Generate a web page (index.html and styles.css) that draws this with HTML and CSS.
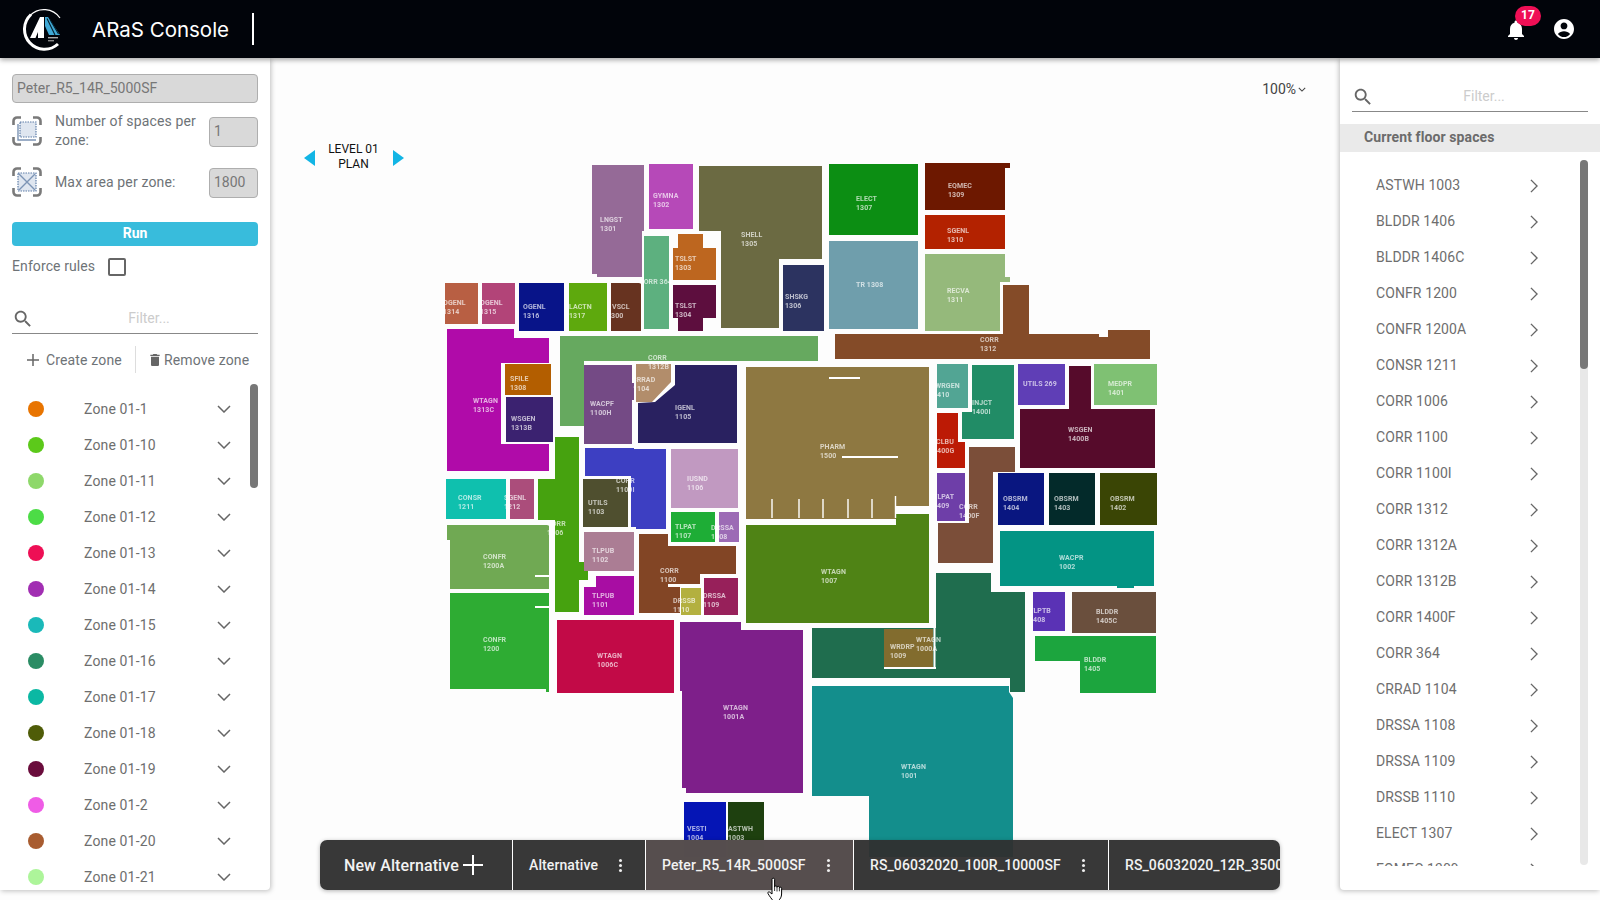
FILE: index.html
```html
<!DOCTYPE html>
<html lang="en">
<head>
    <meta charset="UTF-8">
    <meta name="viewport" content="width=device-width, initial-scale=1.0">
    <title>ARaS Console</title>
    <link rel="stylesheet" href="styles.css">
</head>
<body>
    <header class="topbar">
        <svg class="logo" viewBox="0 0 44 44">
            <path d="M38 11A19.500 19.500 0 0 0 8 8.500" fill="none" stroke="#fff" stroke-width="1.200"/>
            <path d="M9 7.500A19.500 19.500 0 0 0 36 37" fill="none" stroke="#fff" stroke-width="3"/>
            <polygon points="18,10 22,10 22,31 16,31 16,25 13.500,31 8,31" fill="#fff"/>
            <polygon points="23,10 26,10 38,28 27,28 23,19" fill="#3fa9d6"/>
            <path d="M25 11.500L33 28M28 12.500L36.500 27" stroke="#06202e" stroke-width="1.100" fill="none"/>
            <rect x="26" y="30" width="10" height="1.400" fill="#aaa"/>
            <rect x="26" y="33" width="6" height="1.400" fill="#888"/>
        </svg>
        <div class="app-title">ARaS Console</div>
        <div class="title-sep"></div>
        <div class="spacer"></div>
        <div class="bell">
            <svg viewBox="0 0 24 24" width="24" height="24"><path fill="#fff" d="M12 22c1.100 0 2-.9 2-2h-4c0 1.100.9 2 2 2zm6-6v-5c0-3.100-1.600-5.600-4.500-6.300V4c0-.8-.7-1.500-1.500-1.500s-1.500.7-1.500 1.500v.7C7.600 5.400 6 7.900 6 11v5l-2 2v1h16v-1l-2-2z"/></svg>
            <span class="badge">17</span>
        </div>
        <svg class="user" viewBox="0 0 24 24" width="24" height="24"><path fill="#fff" d="M12 2C6.480 2 2 6.480 2 12s4.480 10 10 10 10-4.480 10-10S17.520 2 12 2zm0 3.500c1.900 0 3.400 1.500 3.400 3.400s-1.500 3.400-3.400 3.400-3.400-1.500-3.400-3.400 1.500-3.400 3.400-3.400zM12 20c-2.500 0-4.700-1.200-6.100-3.100 1.500-1.700 3.700-2.600 6.100-2.600s4.600.9 6.100 2.600C16.700 18.800 14.500 20 12 20z"/></svg>
    </header>

    <div class="main">
        <aside class="left">
            <input class="field name-field" type="text" value="Peter_R5_14R_5000SF" disabled>
            <div class="param">
                <svg class="param-icon" viewBox="0 0 30 30">
                    <path class="brk" d="M1.500 9V5a3.500 3.500 0 0 1 3.500-3.500h4M21 1.500h4A3.500 3.500 0 0 1 28.500 5v4M28.500 21v4a3.500 3.500 0 0 1-3.500 3.500h-4M9 28.500H5A3.500 3.500 0 0 1 1.500 25v-4"/>
                    <rect class="dash" x="8" y="6" width="16" height="15"/>
                    <path class="solid" d="M6 8v16h18"/>
                </svg>
                <label>Number of spaces per zone:</label>
                <input class="field small-field" type="text" value="1" disabled>
            </div>
            <div class="param param-two">
                <svg class="param-icon" viewBox="0 0 30 30">
                    <path class="brk" d="M1.500 9V5a3.500 3.500 0 0 1 3.500-3.500h4M21 1.500h4A3.500 3.500 0 0 1 28.500 5v4M28.500 21v4a3.500 3.500 0 0 1-3.500 3.500h-4M9 28.500H5A3.500 3.500 0 0 1 1.500 25v-4"/>
                    <rect class="dash" x="6" y="6" width="18" height="18"/>
                    <path class="solid" d="M7 7l16 16M23 7L7 23"/>
                </svg>
                <label>Max area per zone:</label>
                <input class="field small-field" type="text" value="1800" disabled>
            </div>
            <button class="run">Run</button>
            <div class="enforce">
                <span>Enforce rules</span>
                <span class="checkbox"></span>
            </div>
            <div class="filter left-filter">
                <svg viewBox="0 0 24 24" width="22" height="22"><path fill="#666" d="M15.500 14h-.8l-.3-.3c1-1.100 1.600-2.600 1.600-4.200C16 5.900 13.100 3 9.500 3S3 5.900 3 9.500 5.900 16 9.500 16c1.600 0 3.100-.6 4.200-1.600l.3.3v.8l5 5 1.500-1.500-5-5zm-6 0C7 14 5 12 5 9.500S7 5 9.500 5 14 7 14 9.500 12 14 9.500 14z"/></svg>
                <span class="filter-text">Filter...</span>
            </div>
            <div class="zone-actions">
                <span class="action action-add">
                    <svg viewBox="0 0 14 14" width="14" height="14"><path d="M7 1v12M1 7h12" stroke="#666" stroke-width="1.500" fill="none"/></svg>
                    Create zone
                </span>
                <span class="action-sep"></span>
                <span class="action">
                    <svg viewBox="0 0 24 24" width="16" height="16"><path fill="#666" d="M6 19c0 1.100.9 2 2 2h8c1.100 0 2-.9 2-2V7H6v12zM19 4h-3.500l-1-1h-5l-1 1H5v2h14V4z"/></svg>
                    Remove zone
                </span>
            </div>
            <div class="zone-wrap">
                <div class="zone-scroll"></div>
                <ul class="zones">
                    <li><span class="dot" style="background:#e87400"></span>Zone 01-1<svg class="down" viewBox="0 0 14 8"><path d="M1 1l6 6 6-6"/></svg></li>
                    <li><span class="dot" style="background:#5cc91a"></span>Zone 01-10<svg class="down" viewBox="0 0 14 8"><path d="M1 1l6 6 6-6"/></svg></li>
                    <li><span class="dot" style="background:#8ed86a"></span>Zone 01-11<svg class="down" viewBox="0 0 14 8"><path d="M1 1l6 6 6-6"/></svg></li>
                    <li><span class="dot" style="background:#4cdc46"></span>Zone 01-12<svg class="down" viewBox="0 0 14 8"><path d="M1 1l6 6 6-6"/></svg></li>
                    <li><span class="dot" style="background:#ee0f55"></span>Zone 01-13<svg class="down" viewBox="0 0 14 8"><path d="M1 1l6 6 6-6"/></svg></li>
                    <li><span class="dot" style="background:#a12eb2"></span>Zone 01-14<svg class="down" viewBox="0 0 14 8"><path d="M1 1l6 6 6-6"/></svg></li>
                    <li><span class="dot" style="background:#1ab9b9"></span>Zone 01-15<svg class="down" viewBox="0 0 14 8"><path d="M1 1l6 6 6-6"/></svg></li>
                    <li><span class="dot" style="background:#2a8c64"></span>Zone 01-16<svg class="down" viewBox="0 0 14 8"><path d="M1 1l6 6 6-6"/></svg></li>
                    <li><span class="dot" style="background:#0bb8a3"></span>Zone 01-17<svg class="down" viewBox="0 0 14 8"><path d="M1 1l6 6 6-6"/></svg></li>
                    <li><span class="dot" style="background:#4f5c08"></span>Zone 01-18<svg class="down" viewBox="0 0 14 8"><path d="M1 1l6 6 6-6"/></svg></li>
                    <li><span class="dot" style="background:#6a0c3c"></span>Zone 01-19<svg class="down" viewBox="0 0 14 8"><path d="M1 1l6 6 6-6"/></svg></li>
                    <li><span class="dot" style="background:#ef5ce6"></span>Zone 01-2<svg class="down" viewBox="0 0 14 8"><path d="M1 1l6 6 6-6"/></svg></li>
                    <li><span class="dot" style="background:#a85c30"></span>Zone 01-20<svg class="down" viewBox="0 0 14 8"><path d="M1 1l6 6 6-6"/></svg></li>
                    <li><span class="dot" style="background:#adf59a"></span>Zone 01-21<svg class="down" viewBox="0 0 14 8"><path d="M1 1l6 6 6-6"/></svg></li>
                </ul>
            </div>
        </aside>

        <section class="canvas">
            <div class="zoom-ctl">100%<svg viewBox="0 0 10 6" width="8" height="5"><path d="M1 1l4 4 4-4" fill="none" stroke="#444" stroke-width="1.300"/></svg></div>
            <div class="level">
                <span class="arrow arrow-left"></span>
                <span class="level-name">LEVEL 01<br>PLAN</span>
                <span class="arrow arrow-right"></span>
            </div>

            <svg class="plan" viewBox="430 150 740 720" width="740" height="720">
                <g>
                    <polygon fill="#956a97" points="592,165 644,165 644,231 642,231 642,277 597,277 597,274 592,274"/>
                    <polygon fill="#b649b8" points="649,164 693,164 693,229 649,229"/>
                    <polygon fill="#6b6a42" points="699,166 822,166 822,259 779,259 779,328 721,328 721,231 699,231"/>
                    <polygon fill="#5db07f" points="644,236 669,236 669,329 644,329"/>
                    <polygon fill="#bd661f" points="678,234 703,234 703,248 716,248 716,280 673,280 673,248 678,248"/>
                    <polygon fill="#5d0e3e" points="673,285 716,285 716,318 703,318 703,331 678,331 678,318 673,318"/>
                    <polygon fill="#2c3360" points="783,265 824,265 824,331 783,331"/>
                    <polygon fill="#b85f43" points="445,283 478,283 478,324 445,324"/>
                    <polygon fill="#b24478" points="482,283 515,283 515,324 482,324"/>
                    <polygon fill="#081489" points="519,283 564,283 564,331 519,331"/>
                    <polygon fill="#5ea90d" points="569,283 607,283 607,331 569,331"/>
                    <polygon fill="#673320" points="611,283 641,283 641,331 611,331"/>
                    <polygon fill="#66a95f" points="560,336 818,336 818,361 584,361 584,426 560,426"/>
                    <polygon fill="#b00ba9" points="447,329 514,329 514,338 549,338 549,363 501,363 501,444 549,444 549,471 447,471"/>
                    <polygon fill="#b35e00" points="505,364 551,364 551,395 505,395"/>
                    <polygon fill="#3b2270" points="506,397 553,397 553,442 506,442"/>
                    <polygon fill="#744a85" points="584,365 632,365 632,383 634,383 634,400 632,400 632,444 584,444"/>
                    <polygon fill="#292160" points="675,365 737,365 737,443 638,443 638,403 655,402 675,385"/>
                    <polygon fill="#b28d6b" points="636,364 671,364 671,382 652,402 636,402"/>
                    <polygon fill="#8e7841" points="746,367 929,367 929,506 896,506 896,519 746,519"/>
                    <polygon fill="#4f8315" points="746,525 896,525 896,514 929,514 929,623 746,623"/>
                    <polygon fill="#0c8e13" points="829,164 918,164 918,235 829,235"/>
                    <polygon fill="#6f9eac" points="829,241 918,241 918,329 829,329"/>
                    <polygon fill="#6d1800" points="925,163 1010,163 1010,168 1005,168 1005,210 925,210"/>
                    <polygon fill="#b32200" points="925,215 1005,215 1005,249 925,249"/>
                    <polygon fill="#95b97b" points="925,254 1005,254 1005,277 1010,277 1010,282 1000,282 1000,331 925,331"/>
                    <polygon fill="#844b28" points="1003,285 1029,285 1029,334 1099,334 1099,337 1108,337 1108,330 1150,330 1150,359 835,359 835,334 1003,334"/>
                    <polygon fill="#52a594" points="937,364 968,364 968,408 937,408"/>
                    <polygon fill="#218c66" points="972,365 1014,365 1014,439 962,439 962,412 972,412"/>
                    <polygon fill="#5f3eb6" points="1018,364 1065,364 1065,405 1018,405"/>
                    <polygon fill="#7fc173" points="1094,364 1157,364 1157,405 1094,405"/>
                    <polygon fill="#560b2b" points="1069,366 1091,366 1091,409 1155,409 1155,468 1020,468 1020,409 1069,409"/>
                    <polygon fill="#bc1a05" points="937,413 958,413 958,442 965,442 965,468 937,468"/>
                    <polygon fill="#6e3ea8" points="937,473 965,473 965,521 937,521"/>
                    <polygon fill="#7b4e39" points="969,447 1015,447 1015,472 993,472 993,563 938,563 938,523 969,523"/>
                    <polygon fill="#091680" points="998,473 1044,473 1044,525 998,525"/>
                    <polygon fill="#032a2a" points="1049,473 1095,473 1095,525 1049,525"/>
                    <polygon fill="#3a4505" points="1100,473 1157,473 1157,525 1100,525"/>
                    <polygon fill="#039484" points="1000,531 1154,531 1154,586 1134,586 1134,588 1117,588 1117,586 1000,586"/>
                    <polygon fill="#5a32b5" points="1033,592 1065,592 1065,631 1033,631"/>
                    <polygon fill="#6a4f3d" points="1072,592 1156,592 1156,633 1072,633"/>
                    <polygon fill="#1ca53e" points="1035,636 1156,636 1156,693 1080,693 1080,661 1035,661"/>
                    <polygon fill="#1f6d4e" points="936,573 991,573 991,592 1025,592 1025,692 1010,692 1010,678 812,678 812,628 936,628"/>
                    <polygon fill="#826c2e" points="884,629 933,629 933,667 884,667"/>
                    <polygon fill="#138e8c" points="812,686 1009,686 1009,692 1013,698 1013,857 869,857 869,796 812,796"/>
                    <polygon fill="#7e1f8a" points="680,622 741,622 741,630 803,630 803,793 686,793 686,788 682,788 682,691 680,691"/>
                    <polygon fill="#0515b5" points="684,802 726,802 726,857 684,857"/>
                    <polygon fill="#1e400f" points="728,802 764,802 764,857 728,857"/>
                    <polygon fill="#46a20f" points="555,437 579,437 579,562 588,562 588,580 579,580 579,612 555,612 555,520 538,520 538,479 555,479"/>
                    <polygon fill="#0fc0ae" points="446,479 506,479 506,519 446,519"/>
                    <polygon fill="#ab4d7b" points="510,479 534,479 534,519 510,519"/>
                    <polygon fill="#70a953" points="447,525 549,525 549,589 450,589 450,540 447,540"/>
                    <polygon fill="#2eac33" points="450,593 549,593 549,692 546,692 546,689 450,689"/>
                    <polygon fill="#c20a47" points="557,620 674,620 674,693 557,693"/>
                    <polygon fill="#3d3fc2" points="585,448 634,448 634,449 666,449 666,529 636,529 636,527 631,527 631,476 585,476"/>
                    <polygon fill="#4f4f2f" points="583,479 628,479 628,527 583,527"/>
                    <polygon fill="#c199c1" points="671,449 738,449 738,508 671,508"/>
                    <polygon fill="#1ead36" points="671,512 715,512 715,542 671,542"/>
                    <polygon fill="#9c6bb5" points="719,512 739,512 739,542 719,542"/>
                    <polygon fill="#ab7d94" points="584,532 634,532 634,571 584,571"/>
                    <polygon fill="#a80da3" points="596,576 634,576 634,615 584,615 584,587 596,587"/>
                    <polygon fill="#824525" points="639,534 668,534 668,546 736,546 736,574 700,574 700,584 668,584 668,587 680,587 680,613 639,613"/>
                    <polygon fill="#b3b03f" points="681,588 701,588 701,615 681,615"/>
                    <polygon fill="#97205a" points="704,578 738,578 738,615 704,615"/>
                </g>
                <path class="wall" d="M829 378h31M842 457h56M535 576h14M535 607h14M884 668h52M934.500 628v40"/>
                <path class="tick" d="M772 499v19M799 499v19M823 499v19M848 499v19M872 499v19M895.500 496v22"/>
                <g class="labels">
                    <text x="600" y="222">LNGST<tspan x="600" dy="8.500">1301</tspan></text>
                    <text x="653" y="198">GYMNA<tspan x="653" dy="8.500">1302</tspan></text>
                    <text x="741" y="237">SHELL<tspan x="741" dy="8.500">1305</tspan></text>
                    <text x="639" y="284">CORR 364</text>
                    <text x="675" y="261">TSLST<tspan x="675" dy="8.500">1303</tspan></text>
                    <text x="675" y="308">TSLST<tspan x="675" dy="8.500">1304</tspan></text>
                    <text x="785" y="299">SHSKG<tspan x="785" dy="8.500">1306</tspan></text>
                    <text x="443" y="305">OGENL<tspan x="443" dy="8.500">1314</tspan></text>
                    <text x="480" y="305">OGENL<tspan x="480" dy="8.500">1315</tspan></text>
                    <text x="523" y="309">OGENL<tspan x="523" dy="8.500">1316</tspan></text>
                    <text x="569" y="309">LACTN<tspan x="569" dy="8.500">1317</tspan></text>
                    <text x="612" y="309">VSCL<tspan x="607" dy="8.500">1300</tspan></text>
                    <text x="473" y="403">WTAGN<tspan x="473" dy="8.500">1313C</tspan></text>
                    <text x="510" y="381">SFILE<tspan x="510" dy="8.500">1308</tspan></text>
                    <text x="511" y="421">WSGEN<tspan x="511" dy="8.500">1313B</tspan></text>
                    <text x="648" y="360">CORR<tspan x="648" dy="8.500">1312B</tspan></text>
                    <text x="632" y="382">CRRAD<tspan x="633" dy="8.500">1104</tspan></text>
                    <text x="590" y="406">WACPF<tspan x="590" dy="8.500">1100H</tspan></text>
                    <text x="675" y="410">IGENL<tspan x="675" dy="8.500">1105</tspan></text>
                    <text x="820" y="449">PHARM<tspan x="820" dy="8.500">1500</tspan></text>
                    <text x="856" y="201">ELECT<tspan x="856" dy="8.500">1307</tspan></text>
                    <text x="856" y="287">TR 1308</text>
                    <text x="948" y="188">EQMEC<tspan x="948" dy="8.500">1309</tspan></text>
                    <text x="947" y="233">SGENL<tspan x="947" dy="8.500">1310</tspan></text>
                    <text x="947" y="293">RECVA<tspan x="947" dy="8.500">1311</tspan></text>
                    <text x="980" y="342">CORR<tspan x="980" dy="8.500">1312</tspan></text>
                    <text x="935" y="388">WRGEN<tspan x="933" dy="8.500">1410</tspan></text>
                    <text x="972" y="405">INJCT<tspan x="972" dy="8.500">1400I</tspan></text>
                    <text x="1023" y="386">UTILS 269</text>
                    <text x="1108" y="386">MEDPR<tspan x="1108" dy="8.500">1401</tspan></text>
                    <text x="1068" y="432">WSGEN<tspan x="1068" dy="8.500">1400B</tspan></text>
                    <text x="936" y="444">CLBU<tspan x="933" dy="8.500">1400G</tspan></text>
                    <text x="933" y="499">TLPAT<tspan x="933" dy="8.500">1409</tspan></text>
                    <text x="959" y="509">CORR<tspan x="959" dy="8.500">1400F</tspan></text>
                    <text x="1003" y="501">OBSRM<tspan x="1003" dy="8.500">1404</tspan></text>
                    <text x="1054" y="501">OBSRM<tspan x="1054" dy="8.500">1403</tspan></text>
                    <text x="1110" y="501">OBSRM<tspan x="1110" dy="8.500">1402</tspan></text>
                    <text x="1059" y="560">WACPR<tspan x="1059" dy="8.500">1002</tspan></text>
                    <text x="1029" y="613">TLPTB<tspan x="1029" dy="8.500">1408</tspan></text>
                    <text x="1096" y="614">BLDDR<tspan x="1096" dy="8.500">1405C</tspan></text>
                    <text x="1084" y="662">BLDDR<tspan x="1084" dy="8.500">1405</tspan></text>
                    <text x="821" y="574">WTAGN<tspan x="821" dy="8.500">1007</tspan></text>
                    <text x="890" y="649">WRDRP<tspan x="890" dy="8.500">1009</tspan></text>
                    <text x="916" y="642">WTAGN<tspan x="916" dy="8.500">1000A</tspan></text>
                    <text x="901" y="769">WTAGN<tspan x="901" dy="8.500">1001</tspan></text>
                    <text x="723" y="710">WTAGN<tspan x="723" dy="8.500">1001A</tspan></text>
                    <text x="687" y="831">VESTI<tspan x="687" dy="8.500">1004</tspan></text>
                    <text x="728" y="831">ASTWH<tspan x="728" dy="8.500">1003</tspan></text>
                    <text x="458" y="500">CONSR<tspan x="458" dy="8.500">1211</tspan></text>
                    <text x="504" y="500">SGENL<tspan x="504" dy="8.500">1212</tspan></text>
                    <text x="483" y="559">CONFR<tspan x="483" dy="8.500">1200A</tspan></text>
                    <text x="483" y="642">CONFR<tspan x="483" dy="8.500">1200</tspan></text>
                    <text x="597" y="658">WTAGN<tspan x="597" dy="8.500">1006C</tspan></text>
                    <text x="616" y="483">CORR<tspan x="616" dy="8.500">1100I</tspan></text>
                    <text x="588" y="505">UTILS<tspan x="588" dy="8.500">1103</tspan></text>
                    <text x="687" y="481">IUSND<tspan x="687" dy="8.500">1106</tspan></text>
                    <text x="675" y="529">TLPAT<tspan x="675" dy="8.500">1107</tspan></text>
                    <text x="711" y="530">DRSSA<tspan x="711" dy="8.500">1108</tspan></text>
                    <text x="592" y="553">TLPUB<tspan x="592" dy="8.500">1102</tspan></text>
                    <text x="592" y="598">TLPUB<tspan x="592" dy="8.500">1101</tspan></text>
                    <text x="660" y="573">CORR<tspan x="660" dy="8.500">1100</tspan></text>
                    <text x="673" y="603">DRSSB<tspan x="673" dy="8.500">1110</tspan></text>
                    <text x="703" y="598">DRSSA<tspan x="703" dy="8.500">1109</tspan></text>
                    <text x="547" y="526">CORR<tspan x="547" dy="8.500">1106</tspan></text>
                </g>
            </svg>

            <div class="alts">
                <div class="alt alt-new">New Alternative
                    <svg viewBox="0 0 20 20" width="20" height="20"><path d="M10 0v20M0 10h20" stroke="#fff" stroke-width="2" fill="none"/></svg>
                </div>
                <div class="alt alt-a">Alternative<span class="kebab"><i></i><i></i><i></i></span></div>
                <div class="alt alt-b alt-active">Peter_R5_14R_5000SF<span class="kebab"><i></i><i></i><i></i></span></div>
                <div class="alt alt-c">RS_06032020_100R_10000SF<span class="kebab"><i></i><i></i><i></i></span></div>
                <div class="alt alt-d">RS_06032020_12R_3500SF</div>
            </div>
            <svg class="hand" viewBox="0 0 17 25" width="17" height="25">
                <path fill="#fff" stroke="#000" stroke-width="1" d="M5 2.500a1.300 1.300 0 0 1 2.600 0v7.500a1.200 1.200 0 0 1 2.400 0v.5a1.200 1.200 0 0 1 2.400 0v.8a1.100 1.100 0 0 1 2.200 0V17c0 3-1.500 5-3 6.500H6c-1-1-4-5-5-7-.5-1 .5-2.200 1.600-1.400L5 17z"/>
                <path stroke="#000" stroke-width=".8" d="M7.600 10v4M10 10.500v4M12.400 11.300v3"/>
            </svg>
        </section>

        <aside class="right">
            <div class="filter right-filter">
                <svg viewBox="0 0 24 24" width="22" height="22"><path fill="#666" d="M15.500 14h-.8l-.3-.3c1-1.100 1.600-2.600 1.600-4.200C16 5.900 13.100 3 9.500 3S3 5.900 3 9.500 5.900 16 9.500 16c1.600 0 3.100-.6 4.200-1.600l.3.3v.8l5 5 1.500-1.500-5-5zm-6 0C7 14 5 12 5 9.500S7 5 9.500 5 14 7 14 9.500 12 14 9.500 14z"/></svg>
                <span class="filter-text">Filter...</span>
            </div>
            <div class="band">Current floor spaces</div>
            <div class="space-wrap">
                <div class="space-track"><div class="space-thumb"></div></div>
                <ul class="spaces">
                    <li>ASTWH 1003<svg class="next" viewBox="0 0 9 16"><path d="M1 1l7 7-7 7"/></svg></li>
                    <li>BLDDR 1406<svg class="next" viewBox="0 0 9 16"><path d="M1 1l7 7-7 7"/></svg></li>
                    <li>BLDDR 1406C<svg class="next" viewBox="0 0 9 16"><path d="M1 1l7 7-7 7"/></svg></li>
                    <li>CONFR 1200<svg class="next" viewBox="0 0 9 16"><path d="M1 1l7 7-7 7"/></svg></li>
                    <li>CONFR 1200A<svg class="next" viewBox="0 0 9 16"><path d="M1 1l7 7-7 7"/></svg></li>
                    <li>CONSR 1211<svg class="next" viewBox="0 0 9 16"><path d="M1 1l7 7-7 7"/></svg></li>
                    <li>CORR 1006<svg class="next" viewBox="0 0 9 16"><path d="M1 1l7 7-7 7"/></svg></li>
                    <li>CORR 1100<svg class="next" viewBox="0 0 9 16"><path d="M1 1l7 7-7 7"/></svg></li>
                    <li>CORR 1100I<svg class="next" viewBox="0 0 9 16"><path d="M1 1l7 7-7 7"/></svg></li>
                    <li>CORR 1312<svg class="next" viewBox="0 0 9 16"><path d="M1 1l7 7-7 7"/></svg></li>
                    <li>CORR 1312A<svg class="next" viewBox="0 0 9 16"><path d="M1 1l7 7-7 7"/></svg></li>
                    <li>CORR 1312B<svg class="next" viewBox="0 0 9 16"><path d="M1 1l7 7-7 7"/></svg></li>
                    <li>CORR 1400F<svg class="next" viewBox="0 0 9 16"><path d="M1 1l7 7-7 7"/></svg></li>
                    <li>CORR 364<svg class="next" viewBox="0 0 9 16"><path d="M1 1l7 7-7 7"/></svg></li>
                    <li>CRRAD 1104<svg class="next" viewBox="0 0 9 16"><path d="M1 1l7 7-7 7"/></svg></li>
                    <li>DRSSA 1108<svg class="next" viewBox="0 0 9 16"><path d="M1 1l7 7-7 7"/></svg></li>
                    <li>DRSSA 1109<svg class="next" viewBox="0 0 9 16"><path d="M1 1l7 7-7 7"/></svg></li>
                    <li>DRSSB 1110<svg class="next" viewBox="0 0 9 16"><path d="M1 1l7 7-7 7"/></svg></li>
                    <li>ELECT 1307<svg class="next" viewBox="0 0 9 16"><path d="M1 1l7 7-7 7"/></svg></li>
                    <li>EQMEC 1309<svg class="next" viewBox="0 0 9 16"><path d="M1 1l7 7-7 7"/></svg></li>
                </ul>
            </div>
        </aside>
    </div>
</body>
</html>
```

FILE: styles.css
```css
* {
    box-sizing: border-box;
}
body {
    margin: 0;
    height: 900px;
    overflow: hidden;
    background: #fdfdfd;
    font-family: Roboto, "Liberation Sans", sans-serif;
    font-size: 14px;
    color: #666;
}
ul {
    margin: 0;
    padding: 0;
    list-style: none;
}

/* top bar */
.topbar {
    position: relative;
    z-index: 5;
    display: flex;
    align-items: center;
    height: 58px;
    padding-left: 22px;
    background: #01040a;
    box-shadow: 0 2px 5px rgba(0, 0, 0, 0.35);
}
.logo {
    width: 44px;
    height: 44px;
}
.app-title {
    margin-left: 26px;
    font-family: Inter, sans-serif;
    font-size: 20.500px;
    color: #fff;
}
.title-sep {
    width: 1.500px;
    height: 32px;
    margin-left: 23px;
    background: #fff;
}
.spacer {
    flex: 1;
}
.bell {
    position: relative;
    width: 24px;
    height: 24px;
    margin-right: 24px;
    transform: translateY(1px);
}
.badge {
    position: absolute;
    top: -12px;
    left: 11px;
    width: 26px;
    height: 20px;
    border-radius: 10px;
    background: #ef0f55;
    color: #fff;
    font-size: 12px;
    font-weight: 700;
    line-height: 19px;
    text-align: center;
}
.user {
    margin-right: 24px;
}

.main {
    display: flex;
    height: 832px;
}

/* left panel */
.left {
    position: relative;
    z-index: 2;
    width: 270px;
    height: 832px;
    padding: 16px 12px 0;
    background: #fff;
    box-shadow: 1px 1px 5px rgba(0, 0, 0, 0.25);
    border-radius: 0 0 4px 0;
}
.field {
    height: 30px;
    padding: 0 4px 2px;
    border: 1px solid #aeaeae;
    border-radius: 4px;
    background: #d9d9d9;
    font-family: Roboto, sans-serif;
    font-size: 14px;
    color: #777;
}
.name-field {
    display: block;
    width: 246px;
    height: 29px;
}
.small-field {
    flex: none;
    width: 49px;
}
.param {
    display: flex;
    align-items: center;
    height: 30px;
    margin-top: 14px;
}
.param-two {
    margin-top: 21px;
}
.param-icon {
    flex: none;
    width: 30px;
    height: 30px;
    transform: translateY(-1px);
}
.brk {
    fill: none;
    stroke: #7a7a7a;
    stroke-width: 2.600;
}
.dash {
    fill: #dfe6f0;
    stroke: #5f7ea8;
    stroke-width: 1.200;
    stroke-dasharray: 1.500 1;
}
.solid {
    fill: none;
    stroke: #7c94b5;
    stroke-width: 1.400;
}
.param label {
    width: 154px;
    margin: -2px 0 0 13px;
    line-height: 19px;
    letter-spacing: 0.150px;
    color: #6e7377;
}
.run {
    display: block;
    width: 246px;
    height: 24px;
    margin-top: 24px;
    padding: 0 0 2px;
    border: none;
    border-radius: 4px;
    background: #38bcdc;
    font-family: Roboto, sans-serif;
    font-size: 14px;
    font-weight: 700;
    color: #fff;
}
.enforce {
    display: flex;
    align-items: center;
    gap: 13px;
    height: 18px;
    margin-top: 12px;
    letter-spacing: 0.100px;
    color: #6e7377;
}
.enforce span:first-child {
    margin-top: -2px;
}
.checkbox {
    width: 18px;
    height: 18px;
    border: 2px solid #666;
    border-radius: 2px;
}
.filter {
    position: relative;
    height: 34px;
    border-bottom: 1px solid #888;
}
.filter svg {
    position: absolute;
    top: 8px;
    left: 0;
}
.filter-text {
    display: block;
    padding: 10px 0 0 28px;
    text-align: center;
    color: #ccc;
}
.left-filter {
    margin-top: 24px;
}
.zone-actions {
    display: flex;
    align-items: center;
    height: 27px;
    margin-top: 12px;
    letter-spacing: 0.150px;
    color: #6e7377;
}
.action {
    display: flex;
    align-items: center;
    gap: 1px;
}
.action-add {
    gap: 6px;
    margin-left: 14px;
}
.action-sep {
    width: 1px;
    height: 27px;
    margin: 0 11px 0 13px;
    background: #ddd;
}
.zone-wrap {
    position: relative;
    height: 501px;
    margin-top: 11px;
    padding-top: 7px;
    overflow: hidden;
}
.zone-scroll {
    position: absolute;
    top: 0;
    right: 0;
    width: 8px;
    height: 104px;
    border-radius: 4px;
    background: #777;
}
.zones li {
    display: flex;
    align-items: center;
    height: 36px;
    padding-left: 16px;
    letter-spacing: 0.150px;
    color: #6e6e6e;
}
.dot {
    width: 16px;
    height: 16px;
    margin-right: 40px;
    border-radius: 50%;
}
.down {
    position: absolute;
    left: 205px;
    width: 14px;
    height: 8px;
    fill: none;
    stroke: #666;
    stroke-width: 1.500;
}

/* drawing area */
.canvas {
    position: relative;
    flex: 1;
    padding: 92px 0 0 160px;
}
.plan {
    display: block;
    filter: blur(0.300px);
}
.wall {
    fill: none;
    stroke: #fff;
    stroke-width: 2;
}
.tick {
    fill: none;
    stroke: #fff;
    stroke-width: 1.400;
}
.labels text {
    font-family: Roboto, sans-serif;
    font-size: 7px;
    font-weight: 700;
    letter-spacing: 0.100px;
    fill: rgba(255, 255, 255, 0.68);
}
.zoom-ctl {
    position: absolute;
    top: 23px;
    right: 34px;
    display: flex;
    align-items: center;
    gap: 2px;
    color: #444;
}
.level {
    position: absolute;
    top: 84px;
    left: 34px;
    display: flex;
    align-items: center;
    gap: 7px;
}
.level-name {
    width: 65px;
    margin-left: -1px;
    font-size: 12px;
    line-height: 15px;
    text-align: center;
    color: #111;
}
.arrow {
    width: 0;
    height: 0;
    margin-top: 2px;
    border-top: 8px solid transparent;
    border-bottom: 8px solid transparent;
}
.arrow-left {
    border-right: 11px solid #12b5e5;
}
.arrow-right {
    border-left: 11px solid #12b5e5;
}

/* alternatives bar */
.alts {
    position: absolute;
    top: 782px;
    left: 50px;
    z-index: 3;
    display: flex;
    width: 960px;
    height: 50px;
    overflow: hidden;
    border-radius: 7px;
    background: rgba(48, 48, 48, 0.96);
    box-shadow: 0 1px 4px rgba(0, 0, 0, 0.3);
    letter-spacing: 0.100px;
    color: #f2f2f2;
    font-weight: 500;
    white-space: nowrap;
}
.alt {
    display: flex;
    flex: none;
    align-items: center;
    border-left: 1px solid #fff;
    padding-left: 16px;
}
.alt-new {
    width: 192px;
    gap: 0;
    padding-left: 24px;
    border-left: none;
    font-size: 16px;
}
.alt-new svg {
    margin-left: 4px;
}
.alt-a {
    width: 133px;
}
.alt-b {
    width: 208px;
}
.alt-c {
    width: 255px;
}
.alt-active {
    background: rgba(88, 80, 80, 0.94);
}
.kebab {
    display: flex;
    flex-direction: column;
    gap: 2px;
    margin-left: 21px;
}
.kebab i {
    width: 3px;
    height: 3px;
    border-radius: 50%;
    background: #eee;
}
.hand {
    position: absolute;
    top: 819px;
    left: 497px;
    z-index: 4;
}

/* right panel */
.right {
    position: relative;
    z-index: 2;
    width: 260px;
    height: 832px;
    padding-top: 20px;
    background: #fff;
    box-shadow: -1px 1px 5px rgba(0, 0, 0, 0.25);
    border-radius: 0 0 0 4px;
}
.right-filter {
    margin: 0 12px;
}
.right-filter svg {
    left: 0;
}
.band {
    height: 28px;
    margin-top: 12px;
    padding-left: 24px;
    background: #eaeaea;
    font-weight: 700;
    line-height: 26px;
    letter-spacing: 0.100px;
    color: #6b6b6b;
}
.space-wrap {
    position: relative;
    height: 714px;
    padding-top: 14.500px;
    overflow: hidden;
}
.space-track {
    position: absolute;
    top: 8px;
    right: 12px;
    width: 8px;
    height: 705px;
    border-radius: 4px;
    background: #e8e8e8;
}
.space-thumb {
    height: 209px;
    border-radius: 4px;
    background: #777;
}
.spaces li {
    position: relative;
    display: flex;
    align-items: center;
    height: 36px;
    padding-left: 36px;
    letter-spacing: 0.100px;
    color: #6e6e6e;
}
.next {
    position: absolute;
    left: 190px;
    top: 12px;
    width: 8px;
    height: 14px;
    fill: none;
    stroke: #666;
    stroke-width: 1.600;
}
```
